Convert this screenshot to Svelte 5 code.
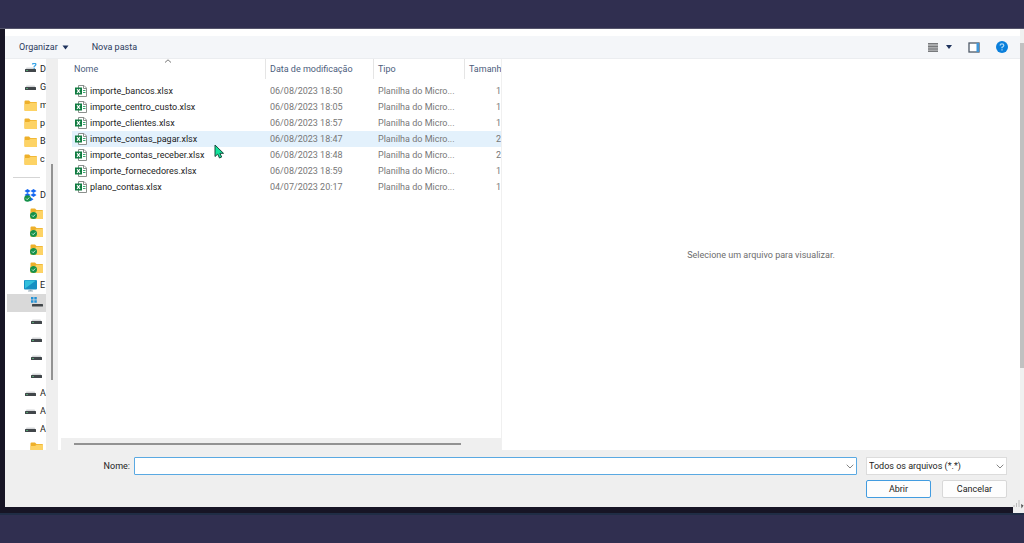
<script>
  const places = [
    { icon: "driveUnknown", label: "D" },
    { icon: "drive", label: "G" },
    { icon: "folder", label: "m" },
    { icon: "folder", label: "p" },
    { icon: "folder", label: "B" },
    { icon: "folder", label: "c" },
    { separator: true },
    { icon: "dropbox", label: "D" },
    { icon: "synced", nested: true },
    { icon: "synced", nested: true },
    { icon: "synced", nested: true },
    { icon: "synced", nested: true },
    { icon: "computer", label: "E" },
    { icon: "system", nested: true, selected: true },
    { icon: "drive", nested: true },
    { icon: "drive", nested: true },
    { icon: "drive", nested: true },
    { icon: "drive", nested: true },
    { icon: "drive", label: "A" },
    { icon: "drive", label: "A" },
    { icon: "drive", label: "A" },
    { icon: "folder", nested: true },
  ];

  const files = [
    { name: "importe_bancos.xlsx", date: "06/08/2023 18:50", size: 1 },
    { name: "importe_centro_custo.xlsx", date: "06/08/2023 18:05", size: 1 },
    { name: "importe_clientes.xlsx", date: "06/08/2023 18:57", size: 1 },
    { name: "importe_contas_pagar.xlsx", date: "06/08/2023 18:47", size: 2 },
    { name: "importe_contas_receber.xlsx", date: "06/08/2023 18:48", size: 2 },
    { name: "importe_fornecedores.xlsx", date: "06/08/2023 18:59", size: 1 },
    { name: "plano_contas.xlsx", date: "04/07/2023 20:17", size: 1 },
  ];

  let hovered = $state(3);
  let fileName = $state("");
</script>

{#snippet folder()}
  <path d="M0.5 2.5q0-1 1-1h3.5l1.5 1.5h5.5q1 0 1 1v7q0 1-1 1h-10.5q-1 0-1-1z" fill="#eeb02a" />
  <path d="M0.5 5h4.5l1.5-1.2h6.5v7.2q0 1-1 1h-10.5q-1 0-1-1z" fill="#fdd365" />
{/snippet}

{#snippet drive()}
  <path d="M2.5 4.500h8l1.500 2.500h-11z" fill="#d5d7d9" />
  <rect x="1" y="6" width="11" height="3" rx="0.5" fill="#41464a" />
  <rect x="2" y="7" width="2" height="1" fill="#55a070" />
{/snippet}

{#snippet chevron()}
  <svg class="chevron" width="8" height="5" viewBox="0 0 8 5" aria-hidden="true">
    <path d="M0.7 0.7l3.3 3.3l3.3-3.3" fill="none" stroke="#858585" />
  </svg>
{/snippet}

{#snippet placeIcon(icon)}
  <svg width="13" height="13" viewBox="0 0 13 13" aria-hidden="true">
    {#if icon === "folder"}
      {@render folder()}
    {:else if icon === "drive"}
      {@render drive()}
    {:else if icon === "driveUnknown"}
      {@render drive()}
      <path d="M8.500 1.500q0-1.200 1.700-1.200t1.700 1.200q0 0.900-1.700 1.900v0.800M10.200 5v1" fill="none" stroke="#38a5e8" stroke-width="1.2" />
    {:else if icon === "synced"}
      {@render folder()}
      <circle cx="3.500" cy="8.500" r="3.500" fill="#16914a" />
      <path d="M2 8.500l1.200 1.200l2-2.200" fill="none" stroke="#c9efd8" />
    {:else if icon === "dropbox"}
      <path d="M3.500 0l3 2l-3 2l-3-2zM9.500 0l3 2l-3 2l-3-2zM3.500 4l3 2l-3 2l-3-2zM9.500 4l3 2l-3 2l-3-2zM6.500 8.300l3 2l-3 2l-3-2z" fill="#1467f2" />
      <circle cx="3.500" cy="9.500" r="3.300" fill="#16914a" />
      <path d="M2 9.500l1.200 1.200l2-2.200" fill="none" stroke="#c9efd8" />
    {:else if icon === "computer"}
      <rect x="0" y="1" width="13" height="9.500" rx="1" fill="#168fc3" />
      <path d="M1 1.500h11l-11 8z" fill="#32bfdc" />
      <path d="M5.500 10.500h2v1h1.500v1h-5v-1h1.500z" fill="#9badb9" />
    {:else if icon === "system"}
      <path d="M1 0h2.500v2.500h-2.500zM4.300 0h2.500v2.500h-2.500zM1 3.300h2.500v2.500h-2.500zM4.300 3.300h2.500v2.500h-2.500z" fill="#2392d6" />
      <rect x="2" y="7" width="11" height="2.500" rx="0.5" fill="#41464a" />
    {/if}
  </svg>
{/snippet}

<div class="screen">
  <div class="window">
    <main class="dialog">
      <header class="toolbar">
        <button class="organize">
          Organizar
          <svg width="7" height="5" viewBox="0 0 7 5" aria-hidden="true"><path d="M0.5 0.5h6l-3 4z" fill="#1e325c" /></svg>
        </button>
        <button>Nova pasta</button>
        <div class="tools">
          <button class="view" aria-label="Modo de exibição">
            <svg width="10" height="9" viewBox="0 0 10 9" aria-hidden="true">
              <rect width="10" height="9" fill="#a9abad" />
              <path d="M0 0.5h10M0 3.500h10M0 6h10M0 8.500h10" stroke="#77797c" />
            </svg>
            <svg width="6" height="4" viewBox="0 0 6 4" aria-hidden="true"><path d="M0 0h6l-3 4z" fill="#1e325c" /></svg>
          </button>
          <button aria-label="Painel de visualização">
            <svg width="12" height="11" viewBox="0 0 12 11" aria-hidden="true">
              <rect x="1" y="1" width="10" height="9" fill="#fff" stroke="#4e5967" stroke-width="1.3" />
              <rect x="8.500" y="1" width="2.500" height="9" fill="#3f96d8" />
            </svg>
          </button>
          <button aria-label="Ajuda">
            <svg width="12" height="12" viewBox="0 0 12 12" aria-hidden="true">
              <circle cx="6" cy="6" r="6" fill="#0a7fdb" />
              <path d="M4.200 4.500q0-1.700 1.800-1.700t1.800 1.600q0 1-1.800 2v0.800M6 8.200v1.300" fill="none" stroke="#a9d8f8" stroke-width="1.3" />
            </svg>
          </button>
        </div>
      </header>

      <div class="browser">
        <nav class="places" aria-label="Locais">
          <ul>
            {#each places as place}
              {#if place.separator}
                <li class="separator"></li>
              {:else}
                <li class:nested={place.nested} class:selected={place.selected}>
                  {@render placeIcon(place.icon)}
                  {#if place.label}<span>{place.label}</span>{/if}
                </li>
              {/if}
            {/each}
          </ul>
          <div class="places-scroll"><div class="thumb"></div></div>
        </nav>

        <section class="files">
          <table>
            <thead>
              <tr>
                <th class="name">
                  <svg class="sort" width="8" height="4" viewBox="0 0 8 4" aria-hidden="true"><path d="M1 3.500l3-2.700l3 2.700" fill="none" stroke="#777" /></svg>
                  <div>Nome</div>
                </th>
                <th class="date"><div>Data de modificação</div></th>
                <th class="type"><div>Tipo</div></th>
                <th class="size"><div>Tamanh</div></th>
              </tr>
            </thead>
            <tbody>
              {#each files as file, i}
                <tr class:hovered={hovered === i} onmouseenter={() => (hovered = i)} onclick={() => (fileName = file.name)}>
                  <td class="file-name">
                    <svg width="12" height="12" viewBox="0 0 12 12" aria-hidden="true">
                      <path d="M3.500 0.5h5.500l2.500 2.500v8.500h-8z" fill="#fff" stroke="#8b908d" />
                      <path d="M8.500 0.5v3h3" fill="none" stroke="#8b908d" />
                      <path d="M8 5.500h2.500M8 7.500h2.500" stroke="#3aa66e" />
                      <rect x="0" y="2.500" width="7" height="7" fill="#107c41" />
                      <path d="M2 4.200l3 3.600M5 4.200l-3 3.600" stroke="#fff" stroke-width="1.1" />
                    </svg>
                    {file.name}
                  </td>
                  <td>{file.date}</td>
                  <td>Planilha do Micro...</td>
                  <td class="number">{file.size}</td>
                </tr>
              {/each}
            </tbody>
          </table>
          <div class="files-scroll"><div class="thumb"></div></div>
        </section>

        <aside class="preview">Selecione um arquivo para visualizar.</aside>
      </div>

      <footer>
        <label for="file-name">Nome:</label>
        <div class="combo">
          <input id="file-name" type="text" bind:value={fileName} />
          <button aria-label="Arquivos recentes">{@render chevron()}</button>
        </div>
        <div class="filter">
          <select aria-label="Tipo de arquivo">
            <option>Todos os arquivos (*.*)</option>
          </select>
          {@render chevron()}
        </div>
        <div class="actions">
          <button class="primary">Abrir</button>
          <button>Cancelar</button>
        </div>
      </footer>
    </main>
    <div class="page-scroll"><div class="thumb"></div></div>
    <svg class="grip" width="11" height="14" viewBox="0 0 11 14" aria-hidden="true">
      <rect width="11" height="14" fill="#efefef" />
      <path d="M1 6v2M3.500 4v4M6 1v7" stroke="#bcbcbc" />
      <path d="M8 5l2.500 1.500l-2 3z" fill="#555" />
    </svg>
  </div>

  <svg class="cursor" width="11" height="15" viewBox="0 0 11 15" aria-hidden="true">
    <path d="M1 1v11.500l2.700-2.400l1.800 3.900l2.200-1l-1.800-3.700h3.600z" fill="#13e39b" stroke="#174b3d" />
  </svg>
</div>

<style>
  :global(body) {
    margin: 0;
    background: #302f50;
  }

  .screen {
    position: relative;
    box-sizing: border-box;
    min-height: 100vh;
    padding: 28px 0;
    display: flex;
    background: #302f50;
    font: 9px/16px Roboto, "Open Sans", sans-serif;
    color: #1c1c1c;
  }

  .window {
    position: relative;
    flex: 1;
    display: flex;
    padding: 0 0 0 5px;
    border-top: 1px solid #55556b;
    border-bottom: 2px solid #202d45;
    background: #171525;
  }

  .dialog {
    flex: 1;
    min-width: 0;
    display: flex;
    flex-direction: column;
    margin-bottom: 6px;
    background: #efefef;
  }

  button {
    padding: 0;
    border: 0;
    background: none;
    font: inherit;
    color: inherit;
  }

  svg {
    display: block;
    flex: none;
  }

  .toolbar {
    display: flex;
    align-items: center;
    gap: 23px;
    height: 22px;
    padding: 0 12px 0 14px;
    border-top: 7px solid #fff;
    border-bottom: 1px solid #ebedf0;
    background: #f4f6f9;
    color: #2b3a5c;
  }

  .toolbar button,
  .tools {
    display: flex;
    align-items: center;
  }

  .organize {
    gap: 4px;
  }

  .tools {
    gap: 16px;
    margin-left: auto;
  }

  .view {
    gap: 8px;
  }

  .browser {
    flex: 1;
    display: flex;
    min-height: 0;
    background: #fff;
  }

  .places {
    flex: none;
    display: flex;
    width: 53px;
    height: 391px;
    overflow: hidden;
  }

  .places ul {
    width: 41px;
    margin: 0;
    padding: 1px 0 0;
    overflow: hidden;
    list-style: none;
  }

  .places li {
    box-sizing: border-box;
    display: flex;
    align-items: center;
    gap: 3px;
    height: 18px;
    margin-left: 2px;
    padding-left: 17px;
  }

  .places li.nested {
    padding-left: 23px;
  }

  .places li.selected {
    background: #d9d9d9;
  }

  .places li.separator::before {
    content: "";
    width: 27px;
    height: 1px;
    margin-left: -11px;
    background: #d5d5d5;
  }

  .places-scroll {
    width: 12px;
    background: #efefef;
  }

  .places-scroll .thumb {
    width: 2px;
    height: 216px;
    margin: 105px 0 0 5px;
    background: #929292;
  }

  .files {
    flex: none;
    display: flex;
    flex-direction: column;
    justify-content: space-between;
    width: 440px;
    margin-left: 3px;
    overflow: hidden;
  }

  table {
    width: 429px;
    margin-left: 11px;
    table-layout: fixed;
    border-collapse: collapse;
    color: #777;
  }

  th {
    position: relative;
    height: 24px;
    padding: 0;
    font-weight: 400;
    text-align: left;
    vertical-align: top;
    color: #4c5d7c;
  }

  th div {
    padding-left: 4px;
    border-right: 1px solid #e5e5e5;
    line-height: 20px;
    overflow: hidden;
    white-space: nowrap;
  }

  th.name {
    width: 194px;
  }

  th.name div {
    padding-left: 2px;
  }

  th.date {
    width: 108px;
  }

  th.type {
    width: 91px;
  }

  th.size div {
    border-right: 0;
  }

  .sort {
    position: absolute;
    top: 0;
    left: 92px;
  }

  td {
    height: 16px;
    padding: 0 0 0 4px;
    line-height: 16px;
    white-space: nowrap;
  }

  .file-name {
    display: flex;
    align-items: center;
    gap: 3px;
    padding-left: 3px;
    color: #1c1c1c;
  }

  .number {
    text-align: right;
  }

  tr.hovered {
    background: #e3f1fc;
  }

  .files-scroll {
    height: 12px;
    background: #efefef;
  }

  .files-scroll .thumb {
    width: 387px;
    height: 2px;
    margin: 5px 0 0 13px;
    background: #929292;
  }

  .preview {
    flex: 1;
    display: flex;
    align-items: center;
    justify-content: center;
    border-left: 1px solid #f0f0f0;
    color: #6d6d6d;
  }

  footer {
    display: grid;
    grid-template-columns: 125px 1fr 141px;
    gap: 5px 4px;
    align-items: center;
    padding: 7px 13px 9px 0;
  }

  label {
    text-align: right;
  }

  .combo,
  .filter {
    position: relative;
    box-sizing: border-box;
    display: flex;
    align-items: center;
    height: 18px;
    background: #fff;
  }

  .combo {
    margin-right: 5px;
    border: 1px solid #5aa9e2;
    border-radius: 1px;
  }

  .combo input {
    flex: 1;
    min-width: 0;
    padding: 0 4px;
    border: 0;
    outline: 0;
    background: none;
    font: inherit;
  }

  .combo button {
    padding: 4px 2px;
  }

  .filter select {
    width: 100%;
    height: 18px;
    padding: 0 2px;
    border: 1px solid #dcdcdc;
    appearance: none;
    background: #fff;
    font: inherit;
    color: inherit;
  }

  .filter .chevron {
    position: absolute;
    right: 3px;
    pointer-events: none;
  }

  .actions {
    grid-column: 3;
    display: grid;
    grid-template-columns: 1fr 1fr;
    gap: 11px;
  }

  .actions button {
    box-sizing: border-box;
    height: 18px;
    border: 1px solid #d8d8d8;
    border-radius: 2px;
    background: #fdfdfd;
    line-height: 16px;
  }

  .actions .primary {
    border-color: #429ce0;
  }

  .page-scroll {
    width: 4px;
    background: #f0f0f0;
  }

  .page-scroll .thumb {
    height: 325px;
    margin-top: 14px;
    background: #c1c1c1;
  }

  .grip {
    position: absolute;
    right: 0;
    bottom: 0;
  }

  .cursor {
    position: absolute;
    top: 144px;
    left: 214px;
  }
</style>
